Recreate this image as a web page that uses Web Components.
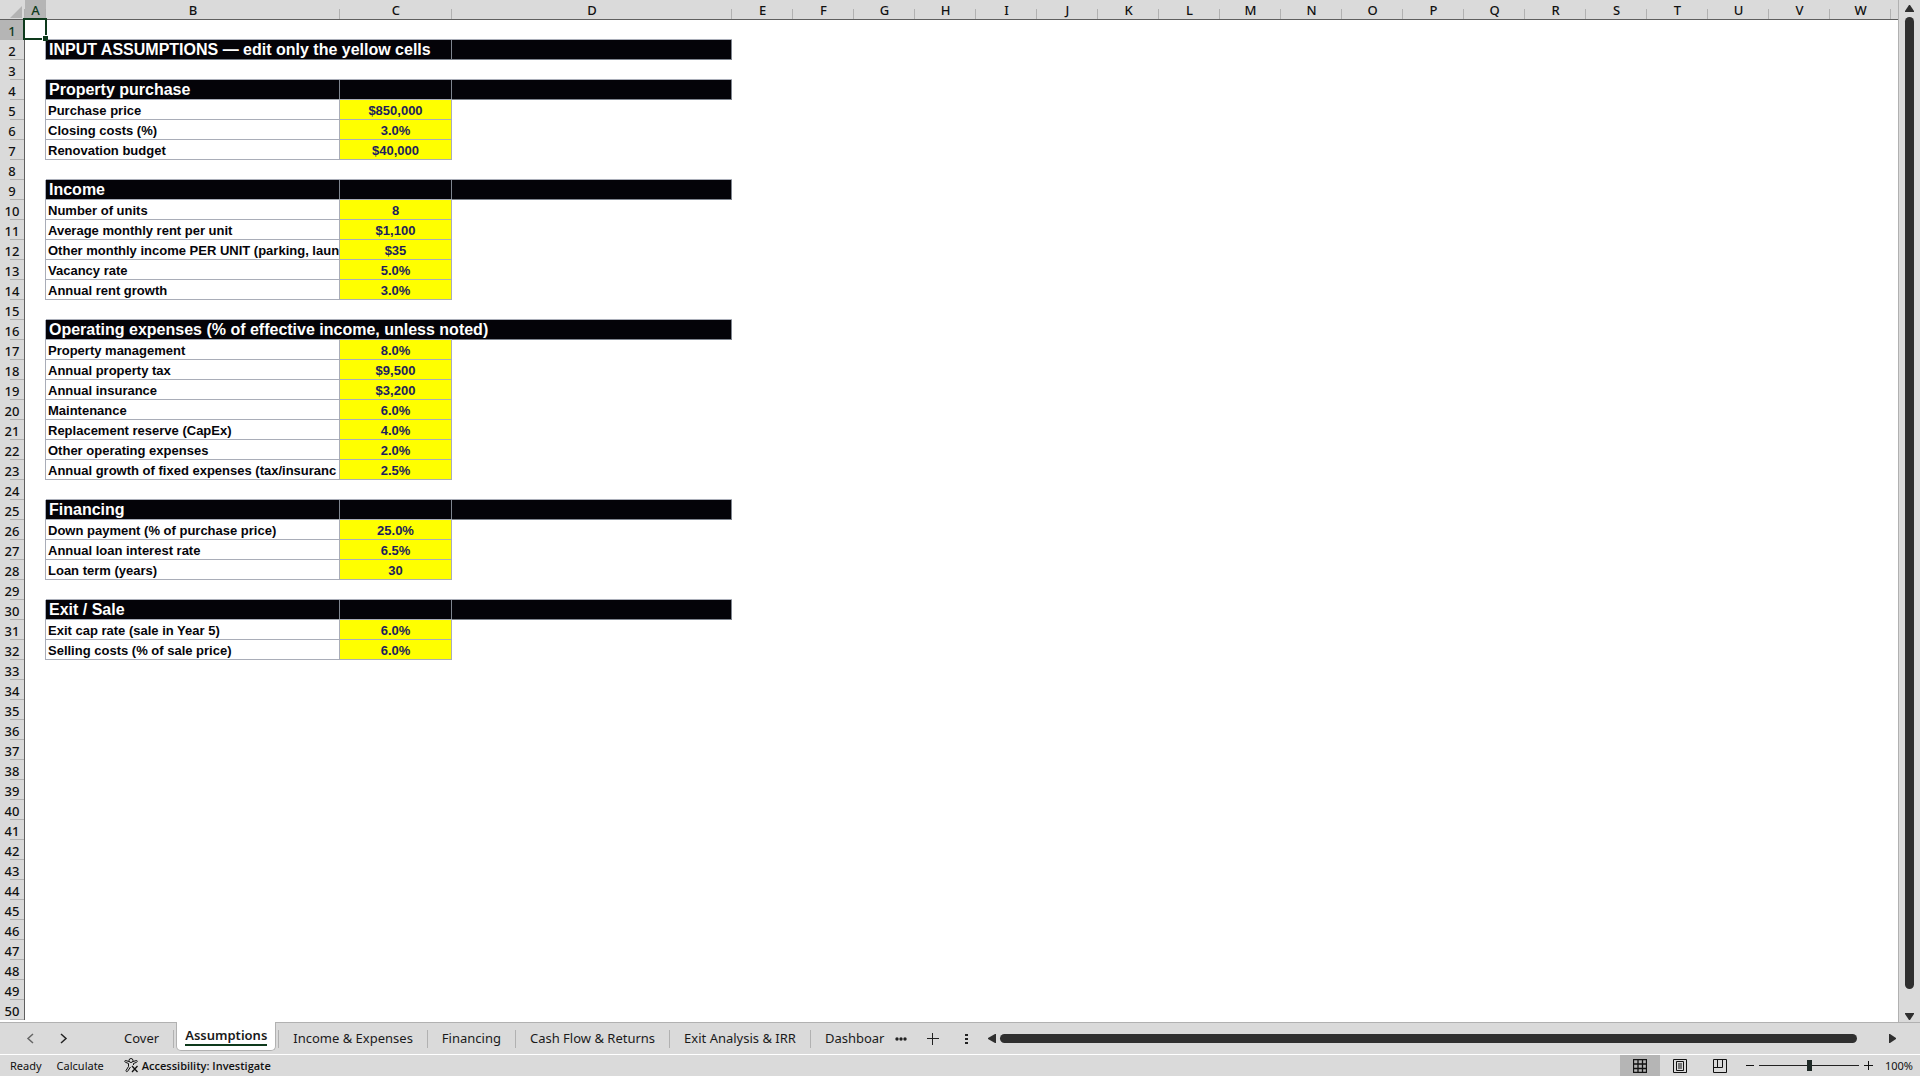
<!DOCTYPE html>
<html lang="en">
<head>
<meta charset="utf-8">
<title>Assumptions</title>
<style>
  body {
    margin: 0;
    height: 100vh;
    display: flex;
    flex-direction: column;
    overflow: hidden;
    background: #dadada;
    color: #111;
    font-family: "Noto Sans", "Open Sans", sans-serif;
  }

  main {
    flex: 1;
    min-height: 0;
    display: flex;
  }

  footer {
    border-top: 1px solid #b1b1b1;
  }
</style>
</head>
<body>
  <main>
    <sheet-grid></sheet-grid>
    <scroll-bar direction="vertical"></scroll-bar>
  </main>
  <footer>
    <sheet-tabs>
      <sheet-tab>Cover</sheet-tab>
      <sheet-tab active>Assumptions</sheet-tab>
      <sheet-tab>Income &amp; Expenses</sheet-tab>
      <sheet-tab>Financing</sheet-tab>
      <sheet-tab>Cash Flow &amp; Returns</sheet-tab>
      <sheet-tab>Exit Analysis &amp; IRR</sheet-tab>
      <sheet-tab last>Dashboar</sheet-tab>
      <scroll-bar slot="scroll" direction="horizontal"></scroll-bar>
    </sheet-tabs>
    <status-bar>
      <span>Ready</span>
      <span>Calculate</span>
    </status-bar>
  </footer>

<script>
const COLUMNS = 'ABCDEFGHIJKLMNOPQRSTUVW'.split('');
const WIDTHS = { A: 21, B: 294, C: 112, D: 280 };
const ROW_COUNT = 50;

// a row is either a black heading (with the number of columns its text covers) or a label and a value
const ROWS = {
  2: { heading: 'INPUT ASSUMPTIONS — edit only the yellow cells', span: 2 },
  4: { heading: 'Property purchase', span: 1 },
  5: { label: 'Purchase price', value: '$850,000' },
  6: { label: 'Closing costs (%)', value: '3.0%' },
  7: { label: 'Renovation budget', value: '$40,000' },
  9: { heading: 'Income', span: 1 },
  10: { label: 'Number of units', value: '8' },
  11: { label: 'Average monthly rent per unit', value: '$1,100' },
  12: { label: 'Other monthly income PER UNIT (parking, laun', value: '$35' },
  13: { label: 'Vacancy rate', value: '5.0%' },
  14: { label: 'Annual rent growth', value: '3.0%' },
  16: { heading: 'Operating expenses (% of effective income, unless noted)', span: 3 },
  17: { label: 'Property management', value: '8.0%' },
  18: { label: 'Annual property tax', value: '$9,500' },
  19: { label: 'Annual insurance', value: '$3,200' },
  20: { label: 'Maintenance', value: '6.0%' },
  21: { label: 'Replacement reserve (CapEx)', value: '4.0%' },
  22: { label: 'Other operating expenses', value: '2.0%' },
  23: { label: 'Annual growth of fixed expenses (tax/insuranc', value: '2.5%' },
  25: { heading: 'Financing', span: 1 },
  26: { label: 'Down payment (% of purchase price)', value: '25.0%' },
  27: { label: 'Annual loan interest rate', value: '6.5%' },
  28: { label: 'Loan term (years)', value: '30' },
  30: { heading: 'Exit / Sale', span: 1 },
  31: { label: 'Exit cap rate (sale in Year 5)', value: '6.0%' },
  32: { label: 'Selling costs (% of sale price)', value: '6.0%' }
};

function template(html) {
  const el = document.createElement('template');
  el.innerHTML = html;
  return el;
}

class BaseElement extends HTMLElement {
  constructor() {
    super();

    this.shadow = this.attachShadow({ mode: 'open' });
    this.shadow.appendChild(this.constructor.template.content.cloneNode(true));
  }
}

class SheetGrid extends BaseElement {
  // language=HTML
  static template = template(`
    <style>
      :host {
        display: block;
        flex: 1;
        min-width: 0;
        overflow: hidden;
        background: white;
        border-right: 1px solid #b1b1b1;
      }

      table {
        table-layout: fixed;
        width: 100%;
        border-spacing: 0;
      }

      th, td {
        box-sizing: border-box;
        height: 20px;
        padding: 2px 0 0;
        line-height: 17px;
        white-space: nowrap;
        overflow: hidden;
      }

      th {
        font-size: 13px;
        font-weight: 500;
        background: #dadada no-repeat right bottom;
      }

      thead th {
        border-bottom: 1px solid #5f5f5f;
        background-image: linear-gradient(#b1b1b1, #b1b1b1);
        background-size: 1px 10px;
      }

      thead th:last-child {
        background-image: none;
      }

      tbody th {
        border-right: 1px solid #5f5f5f;
        background-image: linear-gradient(#b1b1b1, #b1b1b1);
        background-size: 14px 1px;
      }

      th.current {
        background-color: #b5b5b5;
        color: #0e3a1c;
      }

      .corner svg {
        display: block;
        margin: 2px 3px 0 auto;
      }

      .heading, .label, .value {
        font-family: "Liberation Sans", Arial, sans-serif;
        font-weight: bold;
        border-right: 1px solid #a9adb8;
        border-bottom: 1px solid #a9adb8;
        box-shadow: 0 -1px #a9adb8;
      }

      .heading {
        padding: 1px 0 1px 3px;
        background: #040308;
        color: white;
        font-size: 16px;
        border-color: #7f858f;
      }

      .heading.first, .label {
        box-shadow: -1px 0 #a9adb8, 0 -1px #a9adb8;
      }

      .label {
        padding-left: 2px;
        color: #05050a;
        font-size: 13px;
      }

      .value {
        background: #ff0;
        color: #1d1d5c;
        font-size: 13px;
        text-align: center;
      }

      .selected {
        position: relative;
        overflow: visible;
      }

      .selection {
        position: absolute;
        inset: -2px -1px 0 -2px;
        border: 2px solid #0e3a1c;
      }

      .selection::after {
        content: "";
        position: absolute;
        right: -3px;
        bottom: -3px;
        width: 5px;
        height: 5px;
        background: #0e3a1c;
        border: solid white;
        border-width: 1px 0 0 1px;
      }
    </style>

    <table>
      <colgroup></colgroup>
      <thead>
        <tr>
          <th class="corner" aria-label="Select all">
            <svg width="12" height="12"><path d="M12 0v12H0z" fill="#b3b3b3"/></svg>
          </th>
        </tr>
      </thead>
      <tbody></tbody>
    </table>`);

  connectedCallback() {
    this.renderColumns();
    this.renderRows();
  }

  addCell(row, tag, className, text = '', span = 1) {
    const cell = document.createElement(tag);
    cell.className = className;
    cell.textContent = text;
    cell.colSpan = span;
    row.appendChild(cell);
    return cell;
  }

  renderColumns() {
    const group = this.shadow.querySelector('colgroup');
    const head = this.shadow.querySelector('thead tr');

    [ 25, ...COLUMNS.map(name => WIDTHS[name] || 61), 0 ].forEach(width => {
      const col = document.createElement('col');
      if (width) {
        col.style.width = `${width}px`;
      }
      group.appendChild(col);
    });

    COLUMNS.forEach(name => this.addCell(head, 'th', name === 'A' ? 'current' : '', name));
    this.addCell(head, 'th', '');
  }

  renderRows() {
    const body = this.shadow.querySelector('tbody');

    for (let n = 1; n <= ROW_COUNT; n++) {
      const row = document.createElement('tr');
      const data = ROWS[n];

      this.addCell(row, 'th', n === 1 ? 'current' : '', n);
      const first = this.addCell(row, 'td', '');

      if (n === 1) {
        first.className = 'selected';
        first.innerHTML = '<div class="selection"></div>';
      }

      if (data && data.heading) {
        this.addCell(row, 'td', 'heading first', data.heading, data.span);
        for (let i = data.span; i < 3; i++) {
          this.addCell(row, 'td', 'heading');
        }
      } else if (data) {
        this.addCell(row, 'td', 'label', data.label);
        this.addCell(row, 'td', 'value', data.value);
      }

      body.appendChild(row);
    }
  }
}

class ScrollBar extends BaseElement {
  // language=HTML
  static template = template(`
    <style>
      :host {
        display: flex;
        align-items: center;
        color: #2f2f2f;
      }

      :host([direction="vertical"]) {
        flex-direction: column;
        width: 21px;
        padding: 5px 0 1px;
        box-sizing: border-box;
      }

      :host([direction="horizontal"]) {
        flex: 1;
        padding-right: 23px;
      }

      button {
        display: flex;
        padding: 0;
        border: 0;
        background: none;
        color: inherit;
      }

      svg {
        fill: currentColor;
      }

      .thumb {
        flex: 1;
        border-radius: 5px;
        background: currentColor;
      }

      :host([direction="vertical"]) .thumb {
        width: 9px;
        margin: 4px 0 24px;
      }

      :host([direction="horizontal"]) .thumb {
        height: 9px;
        margin: 0 32px 0 4px;
      }

      :host([direction="vertical"]) svg {
        width: 9px;
        height: 8px;
      }

      :host([direction="horizontal"]) svg {
        width: 8px;
        height: 9px;
      }
    </style>

    <button class="back" aria-label="Scroll back"></button>
    <div class="thumb"></div>
    <button class="forward" aria-label="Scroll forward"></button>`);

  connectedCallback() {
    const vertical = this.getAttribute('direction') === 'vertical';
    const back = vertical ? 'M4 0h1l4 6v1H0V6z' : 'M8 0v9H7L0 5V4L7 0z';
    const forward = vertical ? 'M0 0h9v1L5 7H4L0 1z' : 'M0 0h1l6 4v1L1 9H0z';
    this.shadow.querySelector('.back').innerHTML = `<svg><path d="${back}"/></svg>`;
    this.shadow.querySelector('.forward').innerHTML = `<svg><path d="${forward}"/></svg>`;
  }
}

class SheetTab extends BaseElement {
  // language=HTML
  static template = template(`
    <style>
      :host {
        display: flex;
        align-items: center;
      }

      :host::after {
        content: "";
        width: 1px;
        height: 18px;
        background: #b1b1b1;
      }

      :host([last])::after {
        content: none;
      }

      button {
        padding: 0 14px 2px;
        border: 0;
        background: none;
        color: #1a1a1a;
        font: 13px/18px "Noto Sans", "Open Sans", sans-serif;
      }

      :host([last]) button {
        padding-right: 0;
      }

      :host([active]) button {
        align-self: flex-start;
        height: 29px;
        margin: -1px 2px 0;
        padding: 4px 8px;
        border: solid #b1b1b1;
        border-width: 0 1px 1px;
        border-radius: 0 0 5px 5px;
        background: white;
        font-weight: 600;
      }

      :host([active]) span {
        display: block;
        border-bottom: 2px solid #0e3a1c;
      }
    </style>

    <button role="tab"><span><slot></slot></span></button>`);
}

class SheetTabs extends BaseElement {
  // language=HTML
  static template = template(`
    <style>
      :host {
        display: flex;
        align-items: center;
        height: 31px;
        border-bottom: 1px solid white;
      }

      .arrows {
        display: flex;
        gap: 24px;
        padding: 0 42px 0 26px;
      }

      .tabs {
        display: flex;
        align-self: stretch;
      }

      button {
        display: flex;
        padding: 0;
        border: 0;
        background: none;
        color: #222;
      }

      svg {
        fill: none;
        stroke: currentColor;
      }

      .tools {
        display: flex;
        align-items: center;
        gap: 20px;
        padding: 0 20px 0 10px;
      }

      .dots {
        fill: currentColor;
        stroke: none;
      }
    </style>

    <div class="arrows">
      <button aria-label="Previous sheet" style="color: #666">
        <svg width="9" height="11" stroke-width="1.500"><path d="M7 1 2 5.500 7 10"/></svg>
      </button>
      <button aria-label="Next sheet">
        <svg width="9" height="11" stroke-width="1.500"><path d="M2 1l5 4.500L2 10"/></svg>
      </button>
    </div>
    <div class="tabs" role="tablist"><slot></slot></div>
    <div class="tools">
      <button aria-label="More sheets">
        <svg class="dots" width="12" height="4"><circle cx="2" cy="2" r="1.700"/><circle cx="6" cy="2" r="1.700"/><circle cx="10" cy="2" r="1.700"/></svg>
      </button>
      <button aria-label="New sheet">
        <svg width="12" height="12"><path d="M0 5.500h12M5.500 0v12"/></svg>
      </button>
      <button aria-label="Resize tabs" style="margin-left: 6px">
        <svg class="dots" width="3" height="12"><path d="M0 1h3v2H0zM0 5h3v2H0zM0 9h3v2H0z"/></svg>
      </button>
    </div>
    <slot name="scroll"></slot>`);
}

class StatusBar extends BaseElement {
  // language=HTML
  static template = template(`
    <style>
      :host {
        display: flex;
        align-items: center;
        height: 21px;
        padding: 0 7px 0 10px;
        font-size: 11px;
      }

      .state {
        display: flex;
        gap: 15px;
        margin-right: 20px;
      }

      button {
        display: flex;
        align-items: center;
        justify-content: center;
        gap: 4px;
        padding: 0;
        border: 0;
        background: none;
        color: #111;
        font: 600 11px "Open Sans", "Noto Sans", sans-serif;
      }

      svg {
        fill: none;
        stroke: currentColor;
      }

      .view {
        width: 40px;
        height: 21px;
      }

      .view.current {
        background: #b5b5b5;
      }

      .views {
        display: flex;
        margin: 0 6px 0 auto;
      }

      .zoom {
        display: flex;
        align-items: center;
        gap: 5px;
      }

      input {
        appearance: none;
        width: 100px;
        height: 11px;
        margin: 0;
        background: linear-gradient(#222, #222) no-repeat center / 100% 1px;
      }

      input::-webkit-slider-thumb {
        appearance: none;
        width: 5px;
        height: 11px;
        background: #1f2a27;
      }

      .percent {
        width: 35px;
        text-align: right;
      }
    </style>

    <div class="state"><slot></slot></div>
    <button>
      <svg width="14" height="15">
        <circle cx="7" cy="2.500" r="2"/>
        <path d="M5 3.500 1.500 2.500C.5 2.500.5 4 1.500 4.300L4.500 5.500V8.500L2 12.500C2 14 3.300 14 3.800 13L6.500 9M9 3.500l3.500-1c1 0 1 1.500 0 1.800L9.500 5.500V7"/>
        <path d="M8 8l5.500 6M13.500 8 8 14" stroke-width="1.300"/>
      </svg>
      Accessibility: Investigate
    </button>
    <div class="views">
      <button class="view current" aria-label="Normal">
        <svg width="14" height="14"><path d="M.5.5h13v13H.5zM5 .5v13M9.500.5v13M.5 5h13M.5 9.500h13" stroke-width="1.300"/></svg>
      </button>
      <button class="view" aria-label="Page layout">
        <svg width="14" height="14"><path d="M.5.5h13v13H.5zM3.500 2.500h7v9h-7zM5 5h4M5 7h4M5 9h4"/></svg>
      </button>
      <button class="view" aria-label="Page break preview">
        <svg width="14" height="14"><path d="M.5.5h13v13H.5zM4.500.5v8M9.500.5v8h-9"/></svg>
      </button>
    </div>
    <div class="zoom">
      <button aria-label="Zoom out"><svg width="8" height="9"><path d="M0 4.500h8"/></svg></button>
      <input type="range" min="0" max="100" value="50" aria-label="Zoom">
      <button aria-label="Zoom in"><svg width="9" height="9"><path d="M0 4.500h9M4.500 0v9"/></svg></button>
      <span class="percent">100%</span>
    </div>`);
}

window.customElements.define('sheet-grid', SheetGrid);
window.customElements.define('scroll-bar', ScrollBar);
window.customElements.define('sheet-tab', SheetTab);
window.customElements.define('sheet-tabs', SheetTabs);
window.customElements.define('status-bar', StatusBar);
</script>
</body>
</html>
